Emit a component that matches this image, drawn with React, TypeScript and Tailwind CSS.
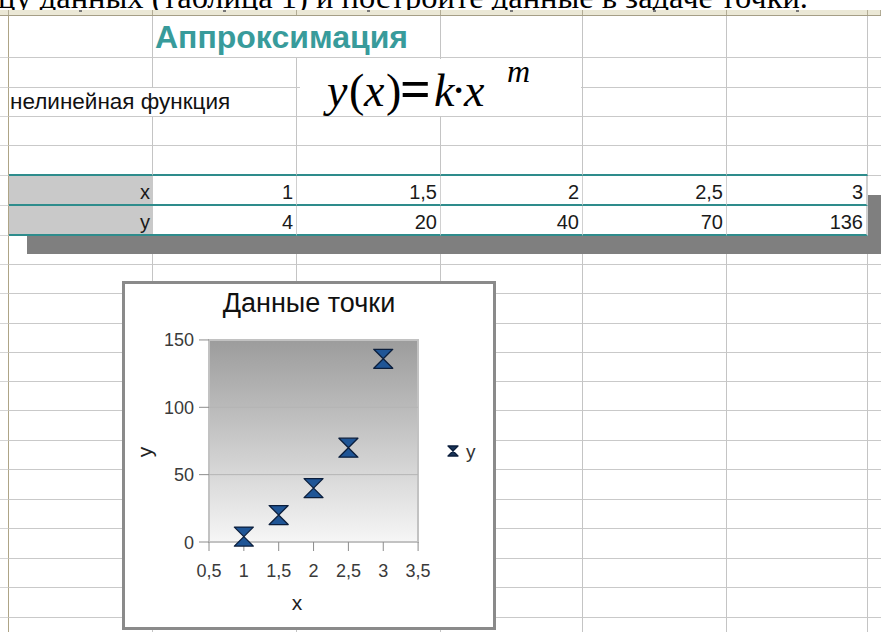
import React from "react";

// Spreadsheet geometry (px)
const colWidths = [9, 144, 144, 144, 142, 144, 141, 13];
const rowHeights = [42, 30, 29, 29, 30, 30, 30, 29, 29, 30, 29, 29, 29, 30, 29, 30, 29, 30, 29, 30, 29];

const xs = ["1", "1,5", "2", "2,5", "3"];
const ys = ["4", "20", "40", "70", "136"];

// chart scale, in page coordinates
const px = (v: number) => 209 + (v - 0.5) * 69.7;
const py = (v: number) => 542 - v * 1.347;

const Hourglass = ({ cx, cy, h, fill, stroke }: { cx: number; cy: number; h: number; fill: string; stroke: string }) => (
  <path
    d={`M${cx - h} ${cy - h}L${cx + h} ${cy - h}L${cx - h} ${cy + h}L${cx + h} ${cy + h}Z`}
    fill={fill}
    stroke={stroke}
    strokeWidth={1.3}
    strokeLinejoin="round"
  />
);

const Chart = () => {
  const points = [
    [1, 4],
    [1.5, 20],
    [2, 40],
    [2.5, 70],
    [3, 136],
  ];
  const xTicks = [0.5, 1, 1.5, 2, 2.5, 3, 3.5];
  const yTicks = [0, 50, 100, 150];
  return (
    <div className="absolute left-[122px] top-[281px] w-[374px] h-[349px] border-[3px] border-[#8a8a8a] bg-white">
      <svg width="368" height="343" viewBox="0 0 368 343" className="block">
        <defs>
          <linearGradient id="plotBg" x1="0" y1="0" x2="0" y2="1">
            <stop offset="0" stopColor="#9c9c9c" />
            <stop offset="1" stopColor="#f6f6f6" />
          </linearGradient>
        </defs>
        <g transform="translate(-125 -284)" fontFamily="'Liberation Sans', Arial, sans-serif">
          <text x="309" y="312" textAnchor="middle" fontSize="27" fill="#111">
            Данные точки
          </text>

          <rect x="209" y="340" width="209" height="202" fill="url(#plotBg)" stroke="#c2c2c2" strokeWidth="2" />
          {[50, 100].map((v) => (
            <line key={v} x1="209" x2="418" y1={py(v)} y2={py(v)} stroke="#b4b4b4" strokeWidth="1" />
          ))}

          {yTicks.map((v) => (
            <g key={v}>
              <line x1="199" x2="209" y1={py(v)} y2={py(v)} stroke="#8c8c8c" strokeWidth="1" />
              <text x="194" y={py(v) + 6.5} textAnchor="end" fontSize="18" fill="#3a3a3a">
                {v}
              </text>
            </g>
          ))}
          {xTicks.map((v) => (
            <g key={v}>
              <line x1={px(v)} x2={px(v)} y1="542" y2="551" stroke="#8c8c8c" strokeWidth="1" />
              <text x={px(v)} y="577" textAnchor="middle" fontSize="18" fill="#3a3a3a">
                {String(v).replace(".", ",")}
              </text>
            </g>
          ))}

          <text x="297" y="610" textAnchor="middle" fontSize="21" fill="#222">
            x
          </text>
          <text transform="translate(152 452) rotate(-90)" textAnchor="middle" fontSize="21" fill="#222">
            y
          </text>

          {points.map(([x, y]) => (
            <Hourglass key={x} cx={px(x)} cy={py(y)} h={9.5} fill="#1f5596" stroke="#0b1e3c" />
          ))}

          <Hourglass cx={453} cy={451} h={5} fill="#1a3558" stroke="#0b1e3c" />
          <text x="466" y="458" fontSize="19" fill="#333">
            y
          </text>
        </g>
      </svg>
    </div>
  );
};

// embedded equation object: y(x) = k·x^m
const Formula = () => (
  <div className="absolute left-[300px] top-[59px] w-[281px] h-[57px] bg-white">
    <svg width="281" height="57" viewBox="0 0 281 57" className="block overflow-visible">
      <g fontFamily="'Liberation Serif', 'Times New Roman', serif" fill="#000">
        <text x="27" y="47" fontSize="46" fontStyle="italic">y</text>
        <text x="49" y="47" fontSize="46">(</text>
        <text x="64" y="47" fontSize="46" fontStyle="italic">x</text>
        <text x="86" y="47" fontSize="46">)</text>
        <text x="100" y="48" fontSize="54" fontWeight="bold">=</text>
        <text x="134" y="47" fontSize="46" fontStyle="italic">k</text>
        <text x="151" y="47" fontSize="46">·</text>
        <text x="164" y="47" fontSize="46" fontStyle="italic">x</text>
        <text x="207" y="23" fontSize="32" fontStyle="italic">m</text>
      </g>
    </svg>
  </div>
);

const Cell = ({ r, c }: { r: number; c: number }) => {
  const inTable = (r === 5 || r === 6) && c >= 1 && c <= 6;
  const aboveTable = r === 4 && c >= 1 && c <= 6;

  if (c === 0) {
    return <div className="border-r border-r-[#aea486] border-b border-b-[#d4d4d4] bg-white" />;
  }

  if (inTable) {
    const label = c === 1;
    const text = label ? (r === 5 ? "x" : "y") : r === 5 ? xs[c - 2] : ys[c - 2];
    return (
      <div
        className={`relative z-10 flex items-end justify-end pr-[3px] pb-[2px] text-[20px] leading-none text-[#1a1a1a] border-b-2 border-b-[#2e8c8c] ${
          label ? "bg-[#c9c9c9]" : "bg-white border-r border-r-[#d0d0d0]"
        } ${c === 6 ? "border-r-2 border-r-[#2e8c8c]" : ""}`}
      >
        {text}
      </div>
    );
  }

  const borderB = aboveTable ? "border-b-2 border-b-[#2e8c8c]" : "border-b border-b-[#c9c9c9]";
  const borderR = c === 7 ? "" : "border-r border-r-[#c4c4c4]";
  return <div className={`${borderB} ${borderR}`} />;
};

const Slot = ({ h, r, c }: { h: number; r: number; c: number }) => (
  <div style={{ height: h }} className="grid">
    <Cell r={r} c={c} />
  </div>
);

export default function App() {
  return (
    <div
      className="relative w-[881px] h-[632px] overflow-hidden bg-white"
      style={{ fontFamily: "'Liberation Sans', Arial, sans-serif" }}
    >
      {/* tail of the paragraph above the sheet */}
      <div className="h-[10px] overflow-hidden">
        <div
          className="-mt-[17px] -ml-[2px] whitespace-nowrap text-[32.5px] leading-[28px] text-black"
          style={{ fontFamily: "'Liberation Serif', 'Times New Roman', serif" }}
        >
          цу данных (таблица 1) и постройте данные в задаче точки.
        </div>
      </div>

      {/* column header strip */}
      <div className="grid h-[6px] grid-cols-[9px_144px_144px_144px_142px_144px_141px_13px] bg-[#ebe8d6] border-b border-b-[#a59e86]">
        {colWidths.map((_, i) => (
          <div key={i} className="flex justify-center items-start border-r border-r-[#b3ad96]">
            {i > 0 && i < 7 && <div className="w-[3px] h-[2px] bg-[#777]" />}
          </div>
        ))}
      </div>

      {/* sheet cells */}
      <div className="grid grid-cols-[9px_144px_144px_144px_142px_144px_141px_13px]">
        {rowHeights.map((h, r) => (
          <div key={r} className="contents">
            {r === 0 ? (
              <>
                <Slot h={h} r={r} c={0} />
                <Slot h={h} r={r} c={1} />
                <div
                  className="col-span-2 border-b border-b-[#c9c9c9] border-r border-r-[#c4c4c4] flex items-center pl-[2px] text-[32px] font-bold text-[#389b9b] whitespace-nowrap"
                  style={{ height: h }}
                >
                  Аппроксимация
                </div>
                {[4, 5, 6, 7].map((c) => (
                  <Slot key={c} h={h} r={r} c={c} />
                ))}
              </>
            ) : r === 2 ? (
              <>
                <Slot h={h} r={r} c={0} />
                <div
                  className="col-span-2 border-b border-b-[#c9c9c9] border-r border-r-[#c4c4c4] flex items-end pb-[3px] pl-[1px] text-[22.5px] leading-none text-[#111] whitespace-nowrap"
                  style={{ height: h }}
                >
                  нелинейная функция
                </div>
                {[3, 4, 5, 6, 7].map((c) => (
                  <Slot key={c} h={h} r={r} c={c} />
                ))}
              </>
            ) : (
              colWidths.map((_, c) => <Slot key={c} h={h} r={r} c={c} />)
            )}
          </div>
        ))}
      </div>

      {/* drop shadow of the data table */}
      <div className="absolute left-[27px] top-[195px] w-[860px] h-[59px] bg-[#7f7f7f]" />

      <Formula />
      <Chart />
    </div>
  );
}
